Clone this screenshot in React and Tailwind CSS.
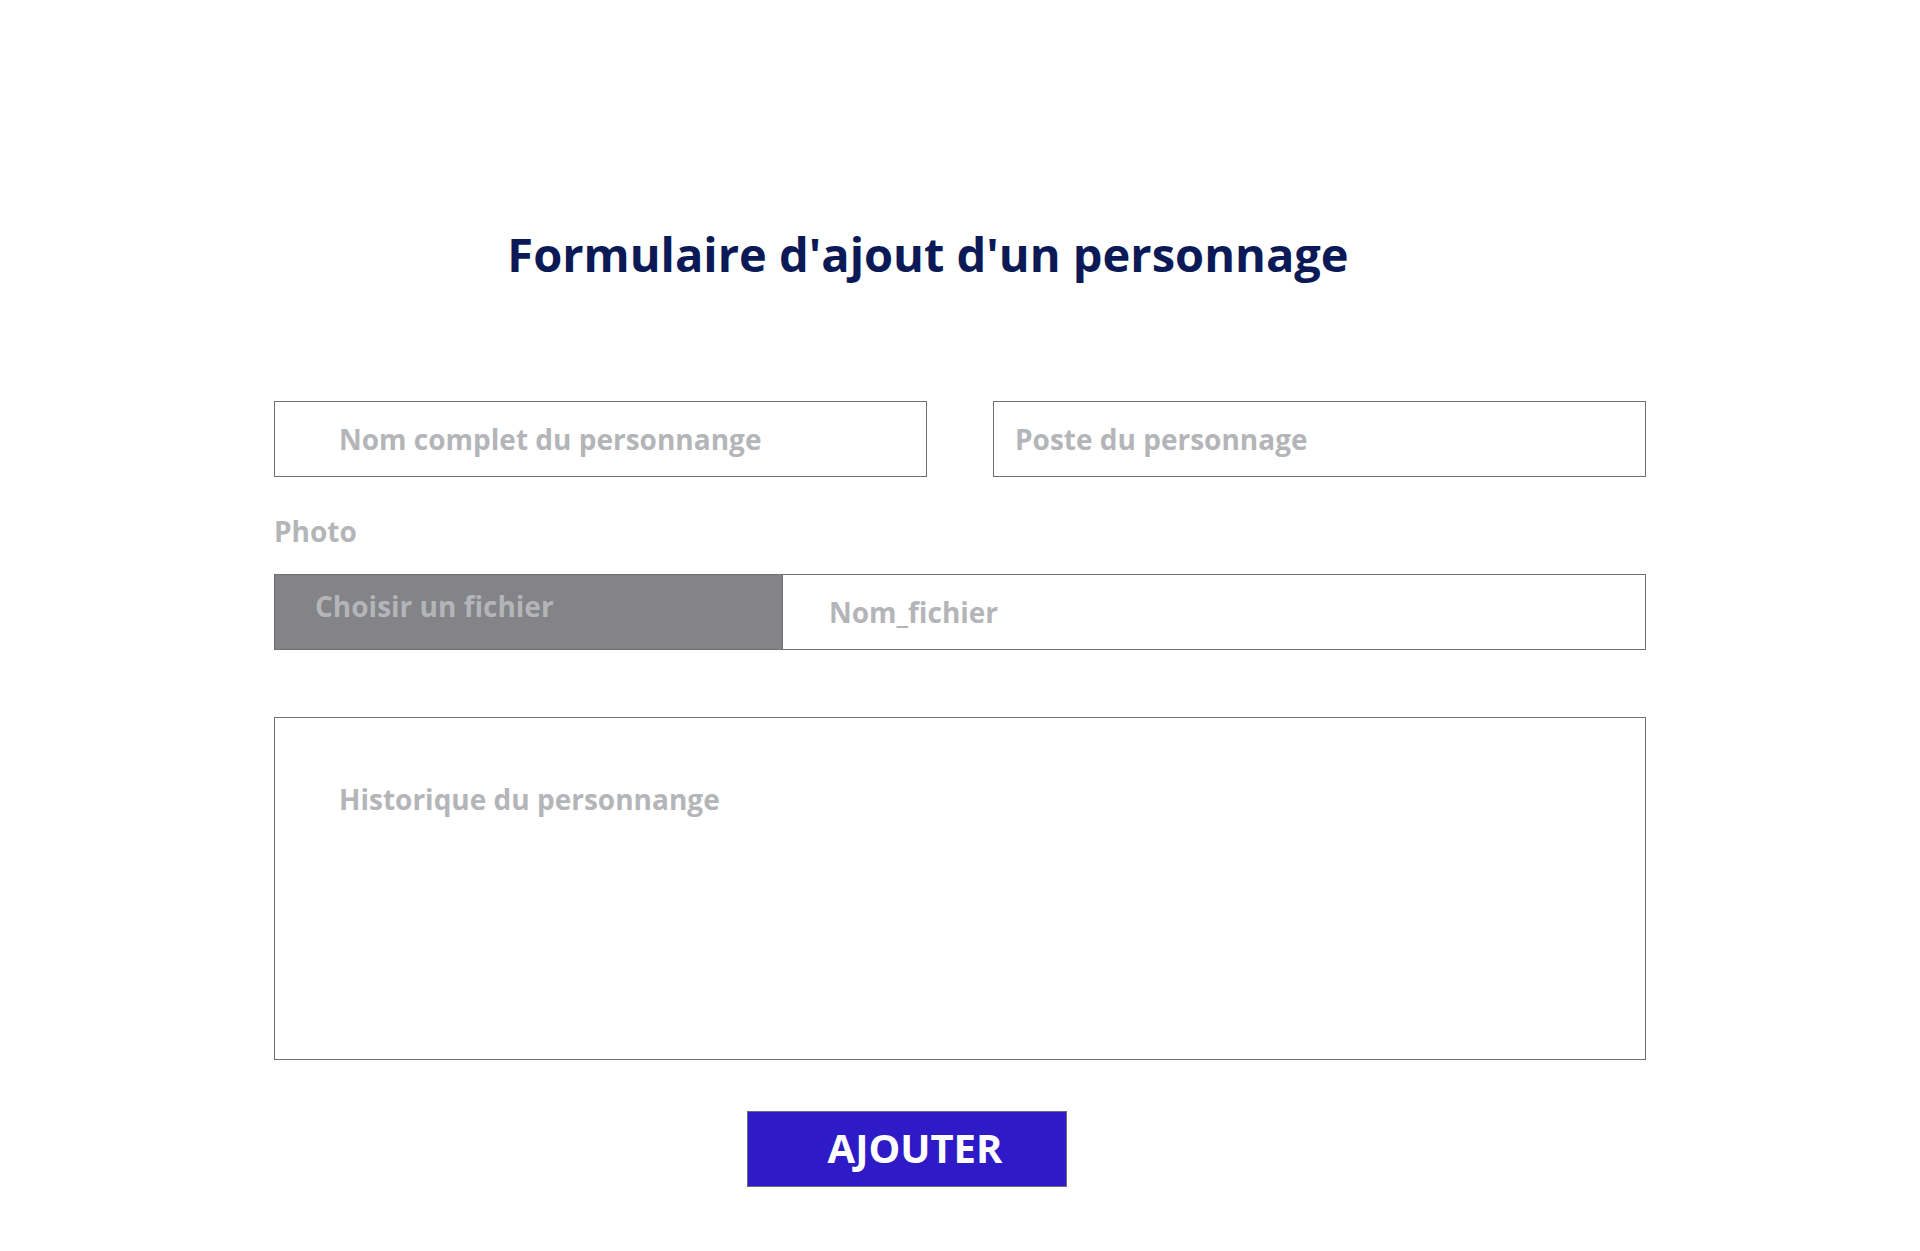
export default function App() {
  return (
    <div className="min-h-[1251px] bg-white" style={{ fontFamily: '"Open Sans", "Noto Sans", sans-serif' }}>
      <div className="w-[1372px] mx-auto pt-[222px] flex flex-col">
        <h1 className="pr-[64px] text-center text-[47px] leading-[64px] font-bold text-[#0b1a57]">
          Formulaire d'ajout d'un personnage
        </h1>

        <div className="mt-[115px] grid grid-cols-2 gap-[66px]">
          <input
            className="h-[76px] border border-[#707070] pl-[64px] text-[28px] font-bold outline-none placeholder:text-[#b4b5b9]"
            placeholder="Nom complet du personnange"
          />
          <input
            className="h-[76px] border border-[#707070] pl-[21px] text-[28px] font-bold outline-none placeholder:text-[#b4b5b9]"
            placeholder="Poste du personnage"
          />
        </div>

        <label className="mt-[38px] text-[28px] leading-[32px] font-bold text-[#b4b5b9]">Photo</label>

        <div className="mt-[27px] flex h-[76px] border border-[#707070]">
          <div className="w-[508px] bg-[#838388] pl-[40px] pt-[10px] text-[28px] font-bold text-[#b4b5b9] border-r border-[#707070]">
            Choisir un fichier
          </div>
          <input
            className="flex-1 pl-[46px] text-[28px] font-bold outline-none placeholder:text-[#b4b5b9]"
            placeholder="Nom_fichier"
          />
        </div>

        <textarea
          className="mt-[67px] h-[343px] resize-none border border-[#707070] pl-[64px] pt-[62px] text-[28px] leading-[38px] font-bold outline-none placeholder:text-[#b4b5b9]"
          placeholder="Historique du personnange"
        />

        <button className="mt-[51px] ml-[473px] h-[76px] w-[320px] border border-[#6b6b80] bg-[#2f1ac8] pl-[16px] pb-[3px] text-[40px] font-bold text-white">
          AJOUTER
        </button>
      </div>
    </div>
  );
}
